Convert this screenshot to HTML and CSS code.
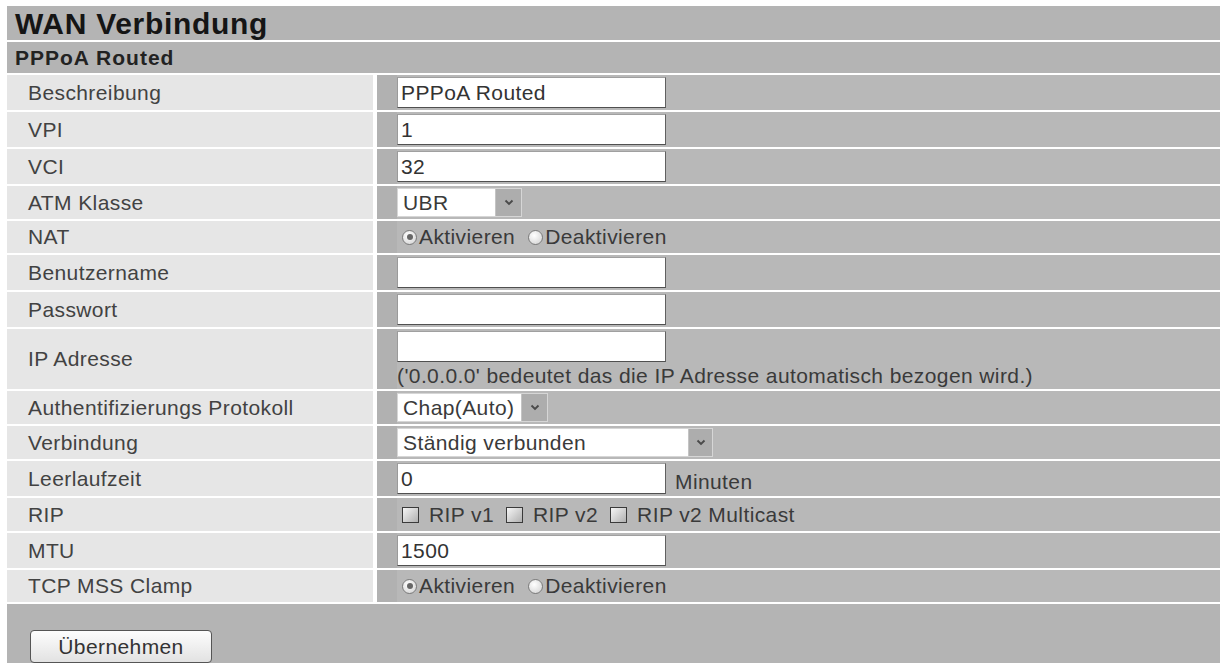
FILE: index.html
```html
<!DOCTYPE html>
<html lang="de">
<head>
<meta charset="utf-8">
<title>WAN Verbindung</title>
<link rel="stylesheet" href="styles.css">
</head>
<body>
<div class="panel">
  <div class="title">WAN Verbindung</div>
  <div class="subtitle">PPPoA Routed</div>

  <div class="row">
    <div class="lbl">Beschreibung</div>
    <div class="val"><input class="txt" type="text" value="PPPoA Routed"></div>
  </div>
  <div class="row">
    <div class="lbl">VPI</div>
    <div class="val"><input class="txt" type="text" value="1"></div>
  </div>
  <div class="row">
    <div class="lbl">VCI</div>
    <div class="val"><input class="txt" type="text" value="32"></div>
  </div>
  <div class="row">
    <div class="lbl">ATM Klasse</div>
    <div class="val">
      <span class="selwrap sel-ubr">
        <select><option>UBR</option><option>CBR</option><option>VBR</option></select>
        <span class="arrow"><svg width="10" height="7" viewBox="0 0 10 7"><path d="M1.5 1.5 L5 5 L8.5 1.5" fill="none" stroke="#4a4a4a" stroke-width="1.9"/></svg></span>
      </span>
    </div>
  </div>
  <div class="row">
    <div class="lbl">NAT</div>
    <div class="val opts">
      <label class="opt"><input type="radio" name="nat" checked>Aktivieren</label>
      <label class="opt"><input type="radio" name="nat">Deaktivieren</label>
    </div>
  </div>
  <div class="row">
    <div class="lbl">Benutzername</div>
    <div class="val"><input class="txt" type="text" value=""></div>
  </div>
  <div class="row">
    <div class="lbl">Passwort</div>
    <div class="val"><input class="txt" type="password" value=""></div>
  </div>
  <div class="row">
    <div class="lbl">IP Adresse</div>
    <div class="val">
      <input class="txt" type="text" value="">
      <div class="note">('0.0.0.0' bedeutet das die IP Adresse automatisch bezogen wird.)</div>
    </div>
  </div>
  <div class="row">
    <div class="lbl">Authentifizierungs Protokoll</div>
    <div class="val">
      <span class="selwrap sel-chap">
        <select><option>Chap(Auto)</option><option>PAP</option><option>CHAP</option></select>
        <span class="arrow"><svg width="10" height="7" viewBox="0 0 10 7"><path d="M1.5 1.5 L5 5 L8.5 1.5" fill="none" stroke="#4a4a4a" stroke-width="1.9"/></svg></span>
      </span>
    </div>
  </div>
  <div class="row">
    <div class="lbl">Verbindung</div>
    <div class="val">
      <span class="selwrap sel-verb">
        <select><option>Ständig verbunden</option><option>Bei Bedarf verbinden</option><option>Manuell verbinden</option></select>
        <span class="arrow"><svg width="10" height="7" viewBox="0 0 10 7"><path d="M1.5 1.5 L5 5 L8.5 1.5" fill="none" stroke="#4a4a4a" stroke-width="1.9"/></svg></span>
      </span>
    </div>
  </div>
  <div class="row">
    <div class="lbl">Leerlaufzeit</div>
    <div class="val inline"><input class="txt" type="text" value="0"><span class="unit">Minuten</span></div>
  </div>
  <div class="row">
    <div class="lbl">RIP</div>
    <div class="val opts chk">
      <label class="opt"><input type="checkbox">RIP v1</label>
      <label class="opt"><input type="checkbox">RIP v2</label>
      <label class="opt"><input type="checkbox">RIP v2 Multicast</label>
    </div>
  </div>
  <div class="row">
    <div class="lbl">MTU</div>
    <div class="val"><input class="txt" type="text" value="1500"></div>
  </div>
  <div class="row">
    <div class="lbl">TCP MSS Clamp</div>
    <div class="val opts">
      <label class="opt"><input type="radio" name="mss" checked>Aktivieren</label>
      <label class="opt"><input type="radio" name="mss">Deaktivieren</label>
    </div>
  </div>

  <div class="footer">
    <button class="btn" type="button">Übernehmen</button>
  </div>
</div>
</body>
</html>
```

FILE: styles.css
```css
html, body {
  background: #ffffff;
}
body {
  margin: 6px 3px 0 7px;
  font-family: "Liberation Sans", Arial, sans-serif;
  font-size: 21px;
  letter-spacing: 0.4px;
  color: #3a3a3a;
}
.panel {
  display: flex;
  flex-direction: column;
  gap: 2px;
}
.title {
  background: #b4b4b4;
  height: 34px;
  line-height: 36px;
  padding-left: 8px;
  font-size: 30px;
  font-weight: bold;
  letter-spacing: 0.7px;
  color: #151515;
}
.subtitle {
  background: #b4b4b4;
  height: 31px;
  line-height: 32px;
  padding-left: 8px;
  font-size: 21px;
  font-weight: bold;
  letter-spacing: 1px;
  color: #222;
}
.row {
  display: grid;
  grid-template-columns: 366px 1fr;
  column-gap: 4px;
}
.lbl {
  background: #e6e6e6;
  display: flex;
  align-items: center;
  padding-left: 21px;
  color: #424242;
}
.val {
  background: linear-gradient(to right, #b1b1b1 20px, #b8b8b8 20px);
  padding: 2px 0 2px 20px;
  display: flex;
  flex-direction: column;
  justify-content: center;
  align-items: flex-start;
}
.txt {
  box-sizing: border-box;
  width: 269px;
  height: 31px;
  margin: 0;
  padding: 0 3px;
  border: 1px solid;
  border-color: #a0a0a0 #606060 #505050 #9a9a9a;
  background: #fff;
  font-family: inherit;
  font-size: 21px;
  letter-spacing: 0.4px;
  color: #333;
}
.note {
  height: 25px;
  line-height: 27px;
  white-space: nowrap;
}
.inline {
  flex-direction: row;
  justify-content: flex-start;
  align-items: center;
}
.unit {
  margin-left: 9px;
  padding-top: 6px;
  line-height: 24px;
}
.selwrap {
  position: relative;
  display: inline-block;
  height: 29px;
}
.selwrap select {
  -webkit-appearance: none;
  appearance: none;
  box-sizing: border-box;
  height: 29px;
  margin: 0;
  padding: 0 30px 0 5px;
  border: 1px solid #d6d6d6;
  border-radius: 0;
  background: #fff;
  font-family: inherit;
  font-size: 21px;
  letter-spacing: 0.4px;
  color: #3a3a3a;
}
.sel-ubr select { width: 125px; }
.sel-chap select { width: 151px; }
.sel-verb select { width: 316px; }
.arrow {
  position: absolute;
  top: 1px;
  right: 1px;
  bottom: 1px;
  width: 25px;
  background: #adadad;
  border-left: 1px solid #c4c4c4;
  display: flex;
  align-items: center;
  justify-content: center;
  pointer-events: none;
}
.sel-verb .arrow { width: 23px; }
.opts {
  flex-direction: row;
  justify-content: flex-start;
  align-items: center;
  height: 28px;
}
.opt {
  display: inline-flex;
  align-items: center;
  margin-right: 2px;
}
.opt input[type="radio"] {
  -webkit-appearance: none;
  appearance: none;
  flex: none;
  box-sizing: border-box;
  width: 15px;
  height: 15px;
  margin: 0 2px 0 5px;
  border: 1px solid #7a7a7a;
  border-radius: 50%;
  background: radial-gradient(circle at 40% 35%, #ffffff, #cfcfcf);
  display: inline-flex;
  align-items: center;
  justify-content: center;
}
.opt input[type="radio"]:checked::after {
  content: "";
  width: 6px;
  height: 6px;
  border-radius: 50%;
  background: #666;
}
.opt + .opt input[type="radio"] {
  margin-left: 11px;
}
.chk {
  height: 29px;
}
.chk .opt {
  margin-right: 7px;
}
.opt input[type="checkbox"] {
  -webkit-appearance: none;
  appearance: none;
  flex: none;
  box-sizing: border-box;
  width: 17px;
  height: 16px;
  margin: 0 10px 0 5px;
  border: 1px solid #3a3a3a;
  background: linear-gradient(135deg, #f6f6f6, #b0b0b0);
}
.footer {
  background: #b4b4b4;
  height: 59px;
  box-sizing: border-box;
  padding: 26px 0 0 23px;
}
.btn {
  box-sizing: border-box;
  width: 182px;
  height: 33px;
  border: 1px solid #555;
  border-radius: 4px;
  background: linear-gradient(#fdfdfd, #e2e2e2);
  font-family: inherit;
  font-size: 21px;
  letter-spacing: 0.4px;
  color: #333;
  padding: 0;
}
```
